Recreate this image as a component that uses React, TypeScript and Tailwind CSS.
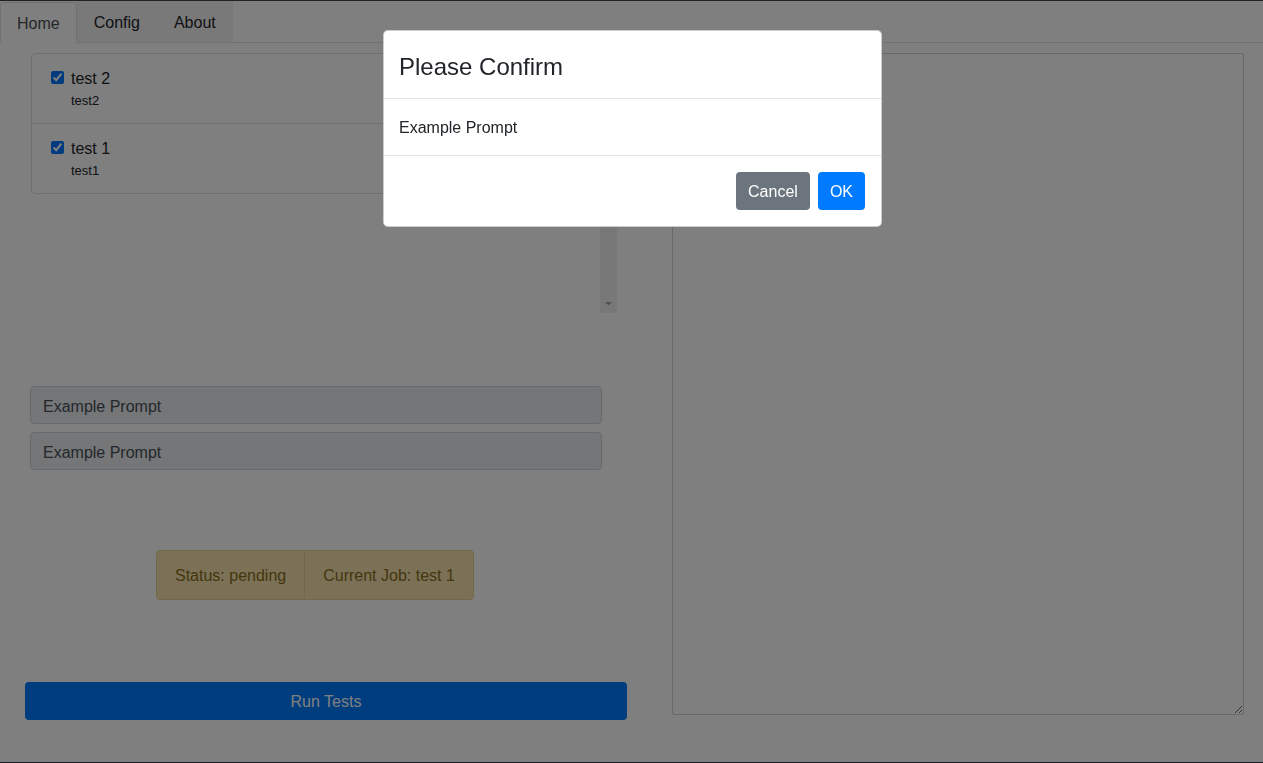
import React from "react";

const TESTS = [
  { label: "test 2", sub: "test2" },
  { label: "test 1", sub: "test1" },
];

function FakeScrollbar() {
  return (
    <div className="w-[17px] h-full bg-[#f1f1f1] flex flex-col items-center justify-between">
      <div className="w-[9px] h-[60px] mt-[17px] rounded-[4px] bg-[#c1c1c1]" />
      <svg width="9" height="17" viewBox="0 0 9 17" className="mb-[1px]">
        <polygon points="1,7 8,7 4.5,10.5" fill="#a3a3a3" />
      </svg>
    </div>
  );
}

export default function App() {
  return (
    <div className="relative h-[763px] bg-white border-t border-b border-[#3f4147] font-['Liberation_Sans',Arial,sans-serif] text-[#212529] overflow-hidden">
      {/* TABS */}
      <nav className="flex items-end h-[42px] border-b border-[#dee2e6] text-[16px]">
        <div className="h-[41px] -mb-px px-4 pt-[1px] leading-[39px] bg-white border border-[#dee2e6] border-b-white rounded-t-[4px] text-[#495057]">
          Home
        </div>
        <div className="h-[41px] px-[17px] pt-[2px] leading-[40px] bg-[#f3f3f3]">Config</div>
        <div className="h-[41px] px-[17px] pt-[2px] leading-[40px] bg-[#f3f3f3]">About</div>
      </nav>

      <div className="flex pt-[10px]">
        {/* LEFT */}
        <div className="ml-[25px] w-[602px] flex flex-col">
          <div className="ml-[6px] w-[586px] h-[260px] flex">
            <div className="flex-1 self-start border border-black/[0.13] rounded-[4px]">
              {TESTS.map((t, i) => (
                <div key={t.sub} className={`flex pl-[19px] pt-[12px] pb-[12px] ${i > 0 ? "border-t border-black/[0.13]" : ""}`}>
                  <input type="checkbox" checked readOnly className="w-[13px] h-[13px] mt-[5px] accent-[#0075ff]" />
                  <div className="ml-[7px]">
                    <div className="text-[16px] leading-[24px] pt-[1px] h-[24px]">{t.label}</div>
                    <div className="text-[13px] leading-[21px]">{t.sub}</div>
                  </div>
                </div>
              ))}
            </div>
            <FakeScrollbar />
          </div>

          <input readOnly value="Example Prompt"
            className="mt-[73px] ml-[5px] w-[572px] h-[38px] px-3 pt-[3px] text-[16px] text-[#495057] bg-[#e9ecef] border border-[#ced4da] rounded-[4px] outline-none" />
          <input readOnly value="Example Prompt"
            className="mt-[8px] ml-[5px] w-[572px] h-[38px] px-3 pt-[3px] text-[16px] text-[#495057] bg-[#e9ecef] border border-[#ced4da] rounded-[4px] outline-none" />

          <div className="mt-[80px] ml-[131px] self-start flex h-[50px] border border-[#e6d08e] rounded-[4px] bg-[#f5e3ae] text-[16px] text-[#8a6d1a]">
            <div className="px-[18px] pt-[2px] leading-[46px]">Status: pending</div>
            <div className="px-[18px] pt-[2px] leading-[46px] border-l border-[#e6d08e]">Current Job: test 1</div>
          </div>

          <button className="mt-[82px] w-full h-[38px] pt-[2px] rounded-[4px] bg-[#007bff] text-white text-[16px]">
            Run Tests
          </button>
        </div>

        {/* RIGHT */}
        <div className="ml-[45px] w-[572px]">
          <textarea className="block w-full h-[662px] border border-[#ced4da] rounded-[2px] bg-white outline-none" />
        </div>
      </div>

      {/* BACKDROP */}
      <div className="fixed inset-0 bg-black/50" />

      {/* MODAL */}
      <div className="fixed inset-0 flex justify-center items-start pt-[30px] pl-[2px]">
        <div className="w-[499px] bg-white border border-black/20 rounded-[5px] overflow-hidden">
          <div className="px-[15px] pt-[18px] pb-[14px] border-b border-[#dee2e6]">
            <h5 className="text-[24px] leading-[35px] font-medium">Please Confirm</h5>
          </div>
          <div className="px-[15px] pt-[17px] pb-[15px] text-[16px] leading-[24px]">Example Prompt</div>
          <div className="flex justify-end gap-2 p-4 border-t border-[#dee2e6]">
            <button className="h-[38px] px-3 pt-[2px] rounded-[4px] bg-[#6c757d] text-white text-[16px]">Cancel</button>
            <button className="h-[38px] px-3 pt-[2px] rounded-[4px] bg-[#007bff] text-white text-[16px]">OK</button>
          </div>
        </div>
      </div>
    </div>
  );
}
